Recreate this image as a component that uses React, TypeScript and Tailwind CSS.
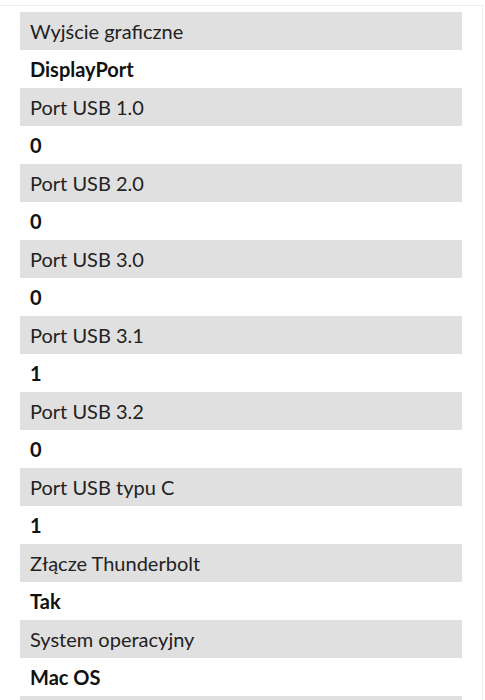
import React from "react";

const rows: [string, string][] = [
  ["Wyjście graficzne", "DisplayPort"],
  ["Port USB 1.0", "0"],
  ["Port USB 2.0", "0"],
  ["Port USB 3.0", "0"],
  ["Port USB 3.1", "1"],
  ["Port USB 3.2", "0"],
  ["Port USB typu C", "1"],
  ["Złącze Thunderbolt", "Tak"],
  ["System operacyjny", "Mac OS"],
];

export default function App() {
  return (
    <div className="bg-white h-[700px] overflow-hidden pt-[5px]" style={{ fontFamily: "Lato, 'Noto Sans', sans-serif" }}>
      <div className="w-[483px] border-t border-r border-[#ececec] pl-[20px] pr-[20px] pt-[6px] h-[800px]">
        {rows.map(([label, value]) => (
          <React.Fragment key={label}>
            <div className="h-[38px] bg-[#e0e0e0] flex items-center pl-[10px] text-[20px] text-[#222222]">
              {label}
            </div>
            <div className="h-[38px] flex items-center pl-[10px] text-[20px] font-bold text-[#111111]">
              {value}
            </div>
          </React.Fragment>
        ))}
        <div className="h-[38px] bg-[#e0e0e0]" />
      </div>
    </div>
  );
}
